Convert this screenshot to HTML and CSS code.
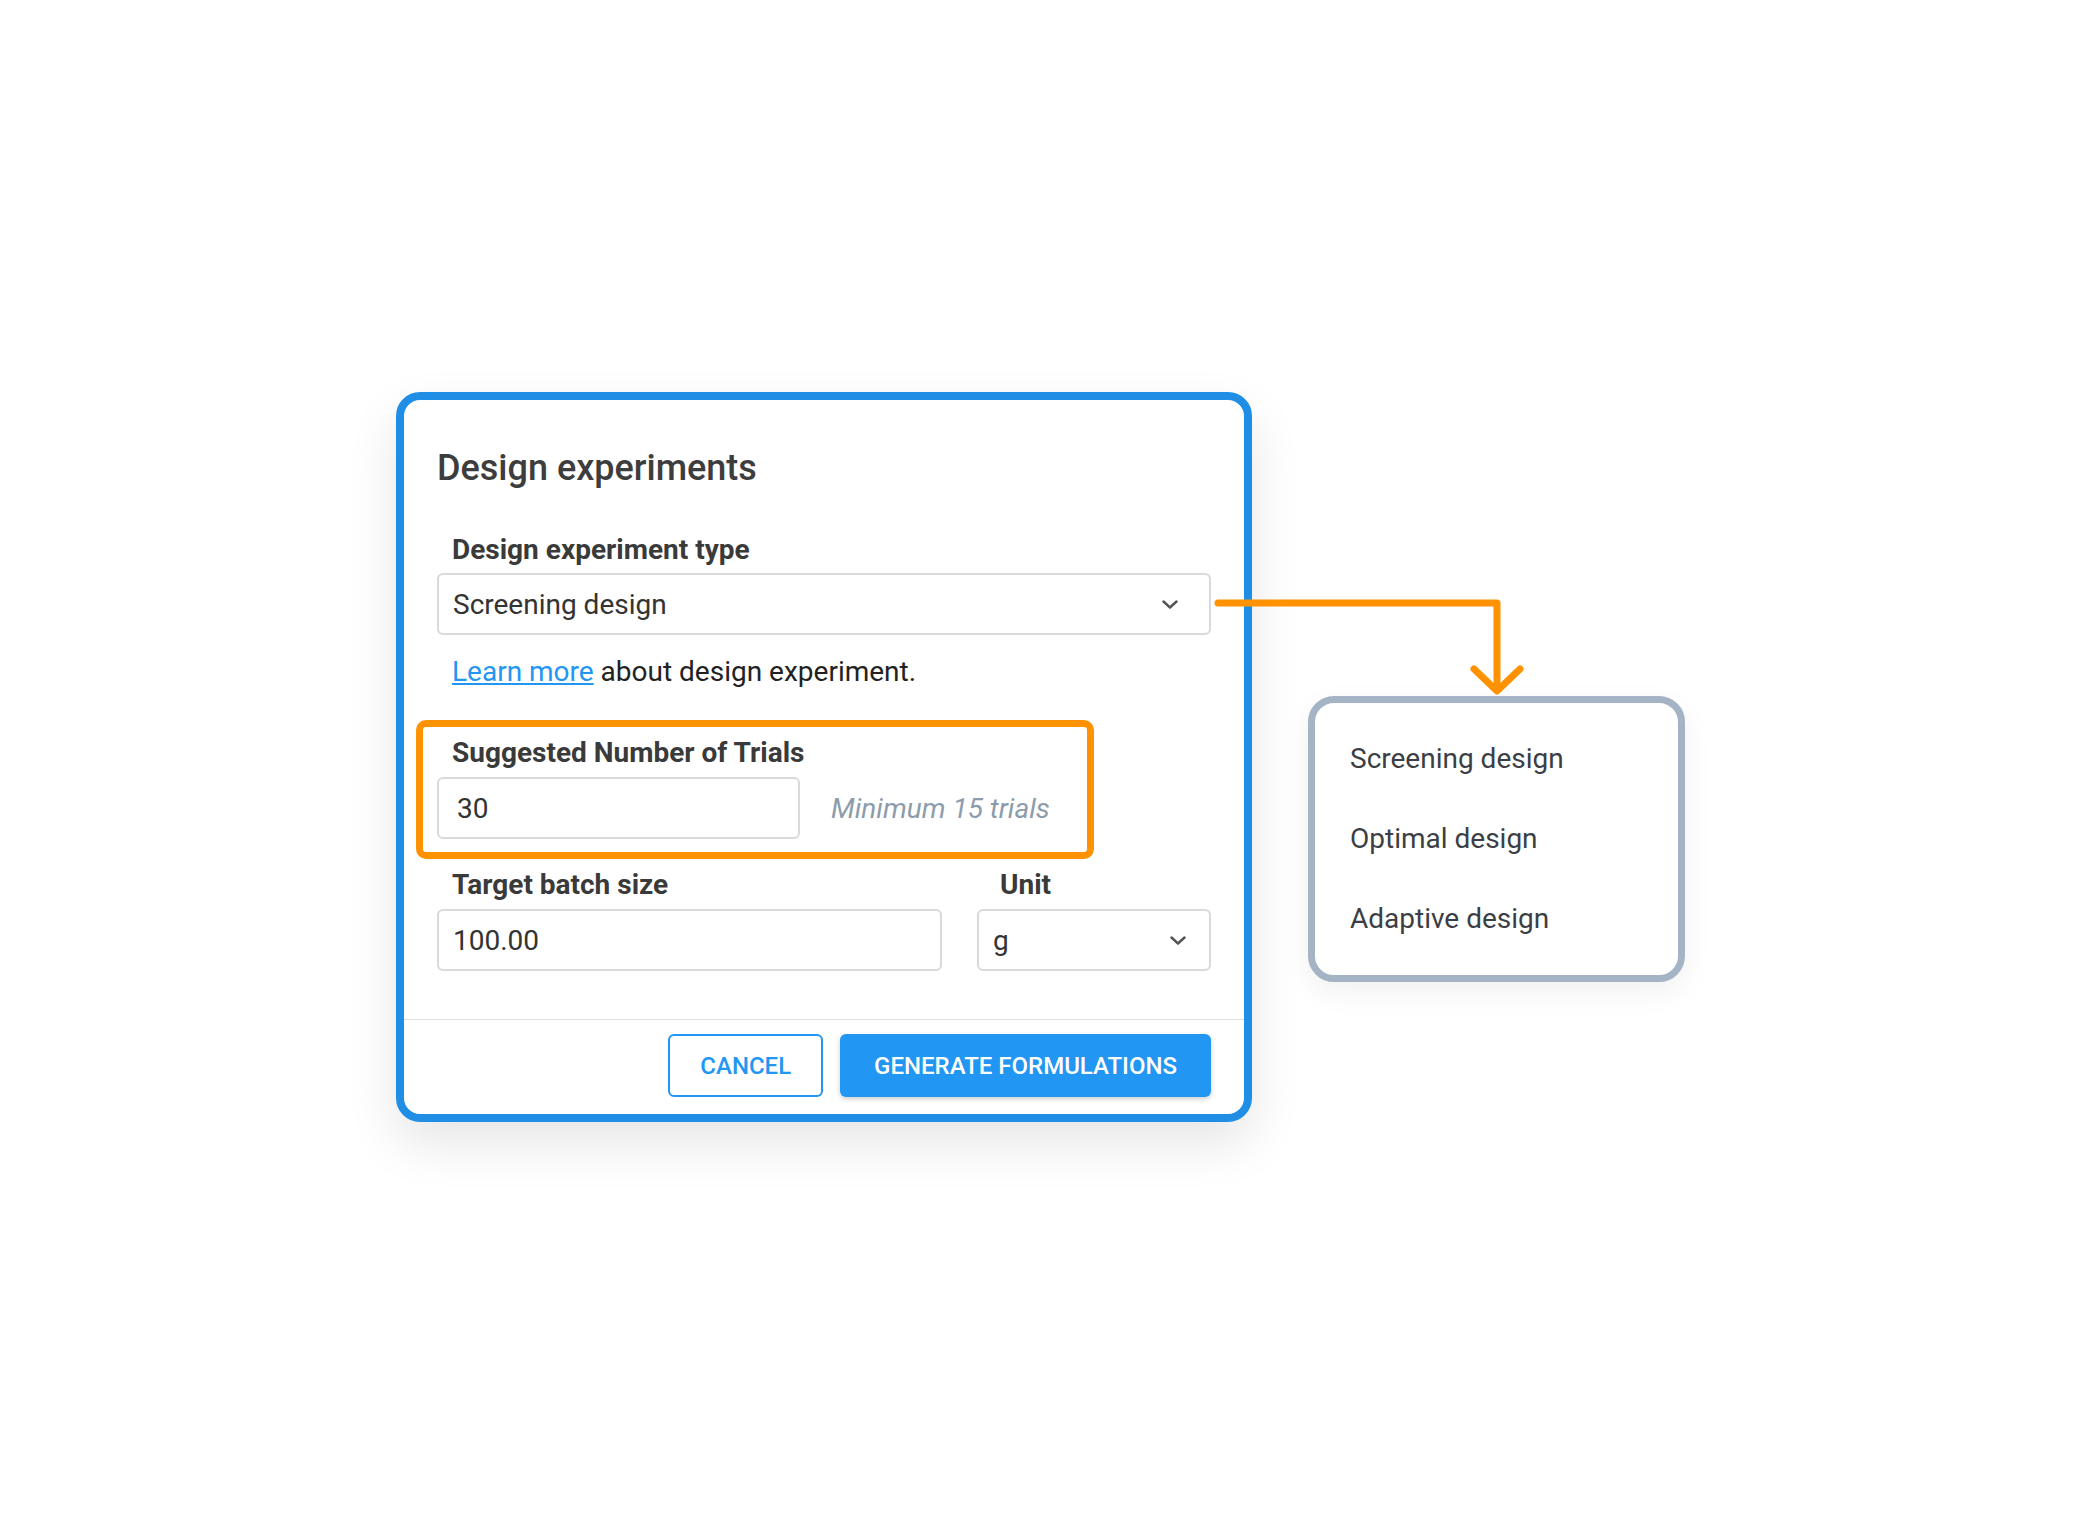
FILE: index.html
```html
<!DOCTYPE html>
<html>
<head>
<meta charset="utf-8"/>
<title>Design experiments</title>
<link rel="stylesheet" href="styles.css">
</head>
<body>

<div class="stage">

  <div class="dialog">
    <div class="dialog-body">
      <h2 class="dialog-title">Design experiments</h2>

      <div class="field first">
        <label class="field-label">Design experiment type</label>
        <div class="select wide">
          <span>Screening design</span>
          <svg class="chevron" width="16" height="9" viewBox="0 0 16 9"><path d="M1.5 1.5 L8 7.5 L14.5 1.5"/></svg>
        </div>
      </div>

      <p class="learn"><a href="#">Learn more</a> about design experiment.</p>

      <!-- highlighted block: trials -->
      <div class="callout">
        <label class="field-label">Suggested Number of Trials</label>
        <div class="trials-row">
          <input class="input trials" type="text" value="30">
          <span class="hint">Minimum 15 trials</span>
        </div>
      </div>

      <div class="field-row">
        <div class="field grow">
          <label class="field-label">Target batch size</label>
          <input class="input" type="text" value="100.00">
        </div>
        <div class="field unit">
          <label class="field-label unit-label">Unit</label>
          <div class="select narrow">
            <span>g</span>
            <svg class="chevron" width="16" height="9" viewBox="0 0 16 9"><path d="M1.5 1.5 L8 7.5 L14.5 1.5"/></svg>
          </div>
        </div>
      </div>
    </div>

    <div class="dialog-actions">
      <button class="btn outline">CANCEL</button>
      <button class="btn primary">GENERATE FORMULATIONS</button>
    </div>
  </div>

  <ul class="menu">
    <li>Screening design</li>
    <li>Optimal design</li>
    <li>Adaptive design</li>
  </ul>

  <!-- connector from the type select down to its option list -->
  <svg class="connector" width="330" height="112" viewBox="0 0 330 112">
    <path d="M13 13 H292 V99"/>
    <path d="M269 79 L292 101 L315 79"/>
  </svg>

</div>

</body>
</html>
```

FILE: styles.css
```css
body {
  margin: 0;
  padding: 0;
  background: #fff;
  font-family: Roboto, "Liberation Sans", sans-serif;
}

.stage {
  position: relative;
  display: flex;
  align-items: flex-start;
  gap: 56px;
  padding: 392px 0 0 396px;
  height: 100vh;
  box-sizing: border-box;
}

/* dialog */
.dialog {
  width: 856px;
  box-sizing: border-box;
  border: 8px solid #218ee6;
  border-radius: 24px;
  background: #fff;
  box-shadow: 0 22px 50px rgba(0, 0, 0, 0.1);
}

.dialog-body {
  padding: 47px 33px 48px;
}

.dialog-title {
  margin: 0;
  font-size: 36px;
  line-height: 42px;
  font-weight: 500;
  color: #3d3d3d;
}

.field.first {
  margin-top: 44px;
}

.field-label {
  display: block;
  padding-left: 15px;
  margin-bottom: 6px;
  font-size: 28px;
  line-height: 34px;
  font-weight: 700;
  color: #3a3a3a;
}

.select,
.input {
  height: 62px;
  box-sizing: border-box;
  border: 2px solid #d9d9d9;
  border-radius: 6px;
  background: #fff;
  font-family: Roboto, "Liberation Sans", sans-serif;
  font-size: 28px;
  color: #333;
}

.select {
  display: flex;
  align-items: center;
  justify-content: space-between;
  padding: 0 31px 0 14px;
}

.select.narrow {
  padding-right: 23px;
}

.chevron path {
  fill: none;
  stroke: #555;
  stroke-width: 2.4;
  stroke-linecap: round;
  stroke-linejoin: round;
}

.input {
  display: block;
  width: 100%;
  padding: 0 14px;
  outline: none;
}

.learn {
  margin: 20px 0 0;
  padding-left: 15px;
  font-size: 28px;
  line-height: 34px;
  color: #222;
}

.learn a {
  color: #2196f3;
}

/* orange highlight round the trials field */
.callout {
  margin: 31px 0 0 -21px;
  width: 678px;
  box-sizing: border-box;
  border: 7px solid #ff9200;
  border-radius: 10px;
  padding: 9px 30px 13px 14px;
}

.callout .field-label {
  margin-bottom: 7px;
}

.trials-row {
  display: flex;
  align-items: center;
  gap: 31px;
}

.input.trials {
  width: 363px;
  padding-left: 18px;
}

.hint {
  font-size: 28px;
  font-style: italic;
  color: #8d9cab;
}

.field-row {
  display: flex;
  gap: 35px;
  margin-top: 9px;
}

.field-row .field-label {
  margin-bottom: 7px;
}

.field.grow {
  flex: 1;
}

.field.unit {
  width: 234px;
}

.unit-label {
  padding-left: 23px;
}

/* footer buttons */
.dialog-actions {
  display: flex;
  justify-content: flex-end;
  gap: 17px;
  border-top: 1px solid #e0e0e0;
  padding: 14px 33px 17px;
}

.btn {
  height: 63px;
  box-sizing: border-box;
  border-radius: 6px;
  font-family: Roboto, "Liberation Sans", sans-serif;
  font-size: 24px;
  font-weight: 500;
  cursor: pointer;
}

.btn.outline {
  padding: 0 30px;
  border: 2px solid #2196f3;
  background: #fff;
  color: #2196f3;
}

.btn.primary {
  padding: 0 34px;
  border: none;
  background: #2196f3;
  color: #fff;
  box-shadow: 0 2px 5px rgba(0, 0, 0, 0.2);
}

/* option list */
.menu {
  list-style: none;
  margin: 304px 0 0;
  padding: 16px 0;
  width: 377px;
  box-sizing: border-box;
  border: 7px solid #a4b4c4;
  border-radius: 26px;
  background: #fff;
  box-shadow: 0 10px 30px rgba(0, 0, 0, 0.06);
}

.menu li {
  padding-left: 35px;
  font-size: 28px;
  line-height: 80px;
  color: #3b3f45;
}

.connector {
  position: absolute;
  left: 1205px;
  top: 590px;
  overflow: visible;
}

.connector path {
  fill: none;
  stroke: #ff9200;
  stroke-width: 7;
  stroke-linecap: round;
  stroke-linejoin: round;
}
```
